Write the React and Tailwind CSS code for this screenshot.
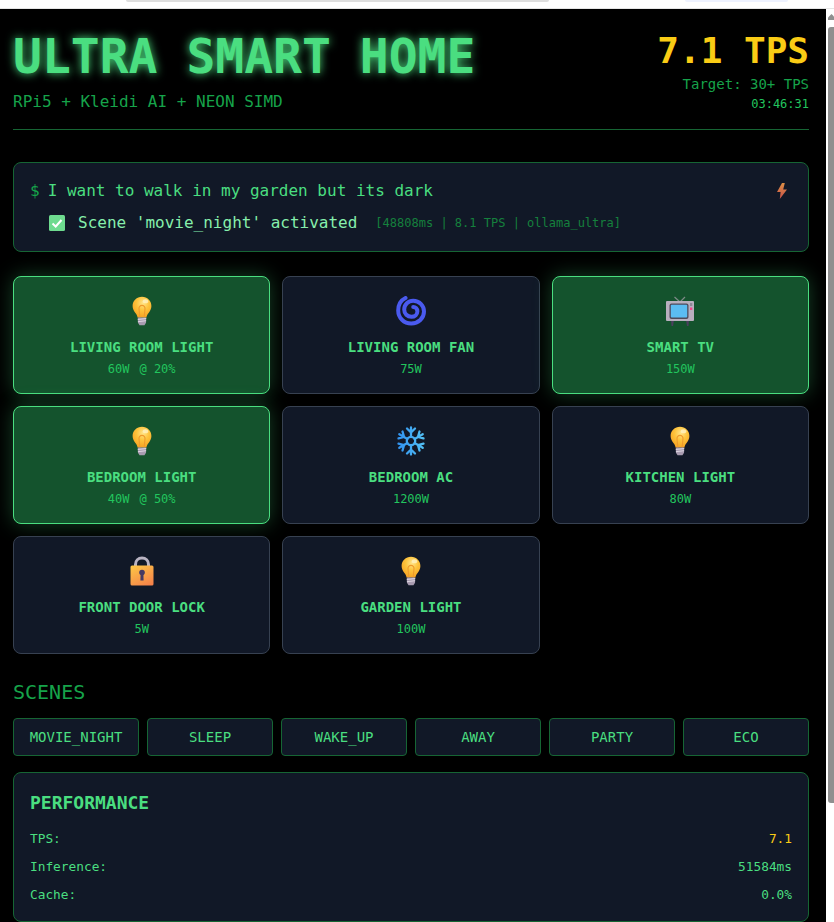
const MONO = "font-['DejaVu_Sans_Mono',monospace]"

// emoji drawn by hand, the installed colour font has another style
function Bulb() {
  return (
    <svg viewBox="0 0 30 30" className="h-[30px] w-[30px]">
      <defs>
        <radialGradient id="bulbGlass" cx="0.55" cy="0.3" r="0.75">
          <stop offset="0" stopColor="#ffe58a" />
          <stop offset="0.45" stopColor="#fdc33c" />
          <stop offset="1" stopColor="#f59e1f" />
        </radialGradient>
      </defs>
      <path d="M15 .8c5.300 0 9.400 4 9.400 9.200 0 3-1.300 5-2.800 6.900-1.200 1.500-2 2.900-2.200 4.700h-8.800c-.2-1.800-1-3.200-2.200-4.700C6.900 15 5.600 13 5.600 10 5.600 4.800 9.700.8 15 .8z" fill="url(#bulbGlass)" />
      <path d="M12.800 21.500 12 12.800c-.2-2 1.200-3.400 3-3.400s3.200 1.400 3 3.400l-.8 8.700" fill="none" stroke="#ee9a2c" strokeWidth="1.100" />
      <ellipse cx="18.500" cy="5.200" rx="2.800" ry="2" fill="#fff3c4" opacity="0.8" />
      <path d="M10.700 21.500h8.600l-.3 5.200-1.500 2.500h-5l-1.500-2.500z" fill="#a89bb0" />
      <path d="M10.800 23.500l8.400-1M10.900 25.700l8.200-1" stroke="#e3dde6" strokeWidth="0.900" />
    </svg>
  )
}

function Fan() {
  return (
    <svg viewBox="0 0 30 30" className="h-[30px] w-[30px]">
      <path
        d="M9.500 2C4.800 4.300 2.200 8.800 2.200 14.500c0 7.300 5.700 13 13 13s12.800-5.300 12.800-12c0-6-4.800-10.800-10.800-10.800-5 0-9 3.800-9 8.800 0 4.200 3.200 7.300 7.200 7.300 3.500 0 6-2.500 6-5.500 0-2.500-1.800-4.300-4.200-4.300"
        fill="none"
        stroke="#4a5aef"
        strokeWidth="4"
        strokeLinecap="round"
      />
    </svg>
  )
}

function Tv() {
  return (
    <svg viewBox="0 0 30 30" className="h-[30px] w-[30px]">
      <path d="M15 6 9.500 1M15 6l5-5" stroke="#7d8a86" strokeWidth="1.200" fill="none" />
      <path d="M6 24h3l-1 6H6.500zM21 24h3l-.500 6H22z" fill="#4b3f5e" />
      <rect x="1" y="5" width="28" height="20" rx="1" fill="#b8afbe" />
      <rect x="4.500" y="7.500" width="19" height="15.500" rx="2" fill="#4e4a5a" />
      <rect x="5.800" y="8.800" width="16.400" height="12.800" rx="1" fill="#5bbcf2" />
      <rect x="25" y="7" width="2.300" height="3" fill="#8e8895" />
      <rect x="25" y="11.500" width="2.300" height="2.500" fill="#f0468a" />
    </svg>
  )
}

function Snowflake() {
  return (
    <svg viewBox="0 0 30 30" className="h-[30px] w-[30px]">
      <defs>
        <linearGradient id="snow" gradientUnits="userSpaceOnUse" x1="0" y1="15" x2="30" y2="15">
          <stop offset="0" stopColor="#2f8ff0" />
          <stop offset="1" stopColor="#55c4f5" />
        </linearGradient>
      </defs>
      <g fill="none" stroke="url(#snow)" strokeWidth="2.300" strokeLinecap="round" strokeLinejoin="round">
        <circle cx="15" cy="15" r="4.200" />
        <path d="M15 10.800V1.500M11 2.500l4 4 4-4" />
        <path d="M15 19.200v9.300M11 27.500l4-4 4 4" />
        <path d="M18.600 12.900l8.100-4.700M27.500 12.400l-5.500-1.500 1.500-5.400" />
        <path d="M11.400 17.100l-8.100 4.700M2.500 17.600l5.500 1.500-1.500 5.400" />
        <path d="M11.400 12.900 3.300 8.200M6.500 5.500l1.500 5.400-5.500 1.500" />
        <path d="M18.600 17.100l8.100 4.700M23.500 24.500l-1.500-5.400 5.500-1.500" />
      </g>
    </svg>
  )
}

function Lock() {
  return (
    <svg viewBox="0 0 30 30" className="h-[30px] w-[30px]">
      <defs>
        <linearGradient id="lockBody" x1="0.2" y1="0" x2="0.8" y2="1">
          <stop offset="0" stopColor="#fdc345" />
          <stop offset="1" stopColor="#f5824a" />
        </linearGradient>
      </defs>
      <path d="M8.500 11V8.500c0-4 2.800-6.500 6.500-6.500s6.500 2.500 6.500 6.500V11" fill="none" stroke="#b9b3c2" strokeWidth="3" />
      <rect x="3.500" y="9.500" width="23" height="20" rx="1.500" fill="url(#lockBody)" />
      <circle cx="15" cy="16.500" r="2.800" fill="#453a63" />
      <path d="M13.600 17h2.800l.2 7.500h-3.200z" fill="#453a63" />
    </svg>
  )
}

function CheckIcon() {
  return (
    <svg viewBox="0 0 16 16" className="h-4 w-4 shrink-0">
      <rect x="0" y="0" width="16" height="16" rx="1.500" fill="#6edb8f" />
      <path d="M3.500 8.500 6.700 11.500 12.500 5" fill="none" stroke="#fff" strokeWidth="2" />
    </svg>
  )
}

function Bolt() {
  return (
    <svg viewBox="0 0 10 16" className="h-4 w-[10px] shrink-0">
      <defs>
        <linearGradient id="boltFill" x1="0" y1="0" x2="0" y2="1">
          <stop offset="0" stopColor="#dd8f45" />
          <stop offset="1" stopColor="#c8504a" />
        </linearGradient>
      </defs>
      <path d="M5 0 0 9h3.600L2.800 16 10 6.400H6.200L7.800 0z" fill="url(#boltFill)" />
    </svg>
  )
}

const devices = [
  { icon: <Bulb />, name: 'LIVING ROOM LIGHT', power: '60W', dim: '@ 20%', on: true },
  { icon: <Fan />, name: 'LIVING ROOM FAN', power: '75W' },
  { icon: <Tv />, name: 'SMART TV', power: '150W', on: true },
  { icon: <Bulb />, name: 'BEDROOM LIGHT', power: '40W', dim: '@ 50%', on: true },
  { icon: <Snowflake />, name: 'BEDROOM AC', power: '1200W' },
  { icon: <Bulb />, name: 'KITCHEN LIGHT', power: '80W' },
  { icon: <Lock />, name: 'FRONT DOOR LOCK', power: '5W' },
  { icon: <Bulb />, name: 'GARDEN LIGHT', power: '100W' },
]

const scenes = ['MOVIE_NIGHT', 'SLEEP', 'WAKE_UP', 'AWAY', 'PARTY', 'ECO']

function DeviceCard({ device }) {
  return (
    <div
      className={`h-[118px] rounded-lg border pt-[19px] text-center ${
        device.on
          ? 'border-[#4ade80] bg-[#14532d] shadow-[0_0_20px_rgba(74,222,128,0.3)]'
          : 'border-[#374151] bg-[#111827]'
      }`}
    >
      <div className="flex h-[30px] justify-center">{device.icon}</div>
      <div className="mt-[11px] text-sm leading-5 font-bold text-[#4ade80]">{device.name}</div>
      <div className="mt-1 text-xs leading-4 text-[#22c55e]">
        {device.power}
        {device.dim && <span className="ml-[10px]">{device.dim}</span>}
      </div>
    </div>
  )
}

function Row({ label, value, color = 'text-[#4ade80]' }) {
  return (
    <div className="flex h-7 items-center justify-between text-[12.8px] text-[#4ade80]">
      <span>{label}</span>
      <span className={color}>{value}</span>
    </div>
  )
}

export default function App() {
  return (
    <div className={`flex h-[922px] flex-col overflow-hidden bg-white ${MONO}`}>
      <div className="flex h-[9px] shrink-0 items-start border-b border-[#e5e5e5] bg-white pl-[126px]">
        <div className="h-[2px] w-[423px] rounded-b bg-[#dedede]" />
        <div className="ml-[136px] h-[2px] w-[103px] rounded-b bg-[#eef2ff]" />
      </div>
      <div className="flex min-h-0 flex-1">
        <main className="min-w-0 flex-1 bg-black pr-[17px] pl-[13px] text-[#4ade80]">
          <header className="flex h-[121px] items-start justify-between border-b border-[#166534] pt-[17px]">
            <div>
              <h1 className="text-5xl leading-[60px] font-bold text-[#4ade80] [text-shadow:0_0_10px_#4ade80]">
                ULTRA SMART HOME
              </h1>
              <p className="mt-1 text-base leading-6 text-[#16a34a]">RPi5 + Kleidi AI + NEON SIMD</p>
            </div>
            <div className="text-right">
              <div className="mt-[5px] text-4xl leading-10 font-bold text-[#facc15]">7.1 TPS</div>
              <div className="mt-[3px] text-sm leading-5 text-[#16a34a]">Target: 30+ TPS</div>
              <div className="mt-[2px] text-xs leading-4 text-[#22c55e]">03:46:31</div>
            </div>
          </header>

          <section className="mt-8 h-[90px] rounded-lg border border-[#166534] bg-[#111827] px-4 pt-4">
            <div className="flex h-6 items-center">
              <span className="mr-2 text-[#16a34a]">$</span>
              <span className="flex-1 text-[#4ade80]">I want to walk in my garden but its dark</span>
              <span className="mr-[5px]">
                <Bolt />
              </span>
            </div>
            <div className="mt-2 flex h-6 items-center pl-[19px]">
              <span className="mr-[13px]">
                <CheckIcon />
              </span>
              <span className="text-[#86efac]">Scene 'movie_night' activated</span>
              <span className="ml-[18px] text-xs text-[#15803d]">[48808ms | 8.1 TPS | ollama_ultra]</span>
            </div>
          </section>

          <section className="mt-6 grid grid-cols-3 gap-3">
            {devices.map((device) => (
              <DeviceCard key={device.name} device={device} />
            ))}
          </section>

          <h2 className="mt-6 text-xl leading-7 text-[#16a34a]">SCENES</h2>
          <div className="mt-3 grid grid-cols-6 gap-2">
            {scenes.map((scene) => (
              <button
                key={scene}
                className="h-[38px] rounded border border-[#166534] bg-[#111827] text-sm text-[#4ade80]"
              >
                {scene}
              </button>
            ))}
          </div>

          <section className="mt-4 h-[150px] rounded-lg border border-[#166534] bg-[#111827] px-4 pt-4">
            <h3 className="mb-2 text-lg leading-7 font-bold text-[#4ade80]">PERFORMANCE</h3>
            <Row label="TPS:" value="7.1" color="text-[#facc15]" />
            <Row label="Inference:" value="51584ms" />
            <Row label="Cache:" value="0.0%" />
          </section>
        </main>
        <div className="w-2 shrink-0 bg-white pt-[5px] pl-[2px]">
          <svg viewBox="0 0 6 6" className="block h-[6px] w-[6px]">
            <path d="M3.500 0 6 2.500V6H0V3.500z" fill="#8f8f8f" />
          </svg>
          <div className="mt-[7px] h-[776px] rounded-l-[3px] bg-[#8f8f8f]" />
        </div>
      </div>
    </div>
  )
}
